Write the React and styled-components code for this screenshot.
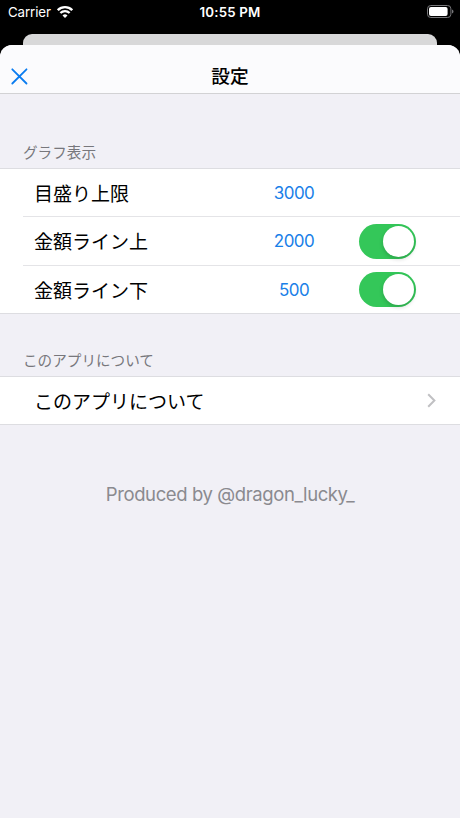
import React, { Component } from 'react';
import styled, { createGlobalStyle } from 'styled-components';

const GlobalStyle = createGlobalStyle`
    * {
        box-sizing: border-box;
    }
    body {
        margin: 0;
        background-color: #000;
        font-family: Inter, 'Noto Sans CJK JP', sans-serif;
    }
`;

const Screen = styled.div`
    display: flex;
    flex-direction: column;
    width: 460px;
    height: 818px;
    overflow: hidden;
    background-color: #000;
`;

const StatusBar = styled.header`
    display: grid;
    grid-template-columns: 1fr auto 1fr;
    align-items: center;
    height: 34px;
    padding: 0 6px 10px 8px;
    color: #fff;
    font-size: 13px;
`;

const Carrier = styled.div`
    display: flex;
    align-items: center;
    gap: 6px;
    font-size: 13.3px;
    letter-spacing: -0.1px;
`;

const Clock = styled.div`
    margin-right: 2px;
    font-size: 13.3px;
    font-weight: 600;
    letter-spacing: 0.2px;
`;

const BatteryIcon = styled.svg`
    justify-self: end;
    margin-bottom: 2px;
`;

const BackCard = styled.div`
    flex: none;
    height: 11px;
    margin: 0 23px;
    border-radius: 9px 9px 0 0;
    background-color: #d8d8d9;
`;

const Sheet = styled.main`
    flex: 1;
    border-radius: 12px 12px 0 0;
    overflow: hidden;
    background-color: #f1f0f6;
`;

const NavBar = styled.div`
    display: grid;
    grid-template-columns: 1fr auto 1fr;
    align-items: center;
    height: 49px;
    padding: 14px 11px 0;
    border-bottom: 1px solid #d2d2d4;
    background-color: #fbfbfd;
`;

const CloseButton = styled.button`
    display: flex;
    width: 17px;
    height: 17px;
    padding: 0;
    border: none;
    background: none;
`;

const Title = styled.h1`
    margin: 2px 0 0;
    font-size: 18.7px;
    line-height: 26px;
    font-weight: 500;
`;

const SectionTitle = styled.h2`
    height: ${props => props.$height}px;
    margin: 0;
    padding: ${props => props.$height - 27}px 23px 0;
    color: #77777c;
    font-size: 14.6px;
    line-height: 24px;
    font-weight: 400;
`;

const Group = styled.section`
    border-top: 1px solid #dddde1;
    border-bottom: 1px solid #dddde1;
    background-color: #fff;
`;

const Row = styled.div`
    display: grid;
    grid-template-columns: ${props => (props.$link ? '1fr auto' : '215px 90px 1fr')};
    align-items: center;
    height: ${props => props.$height}px;
    margin-left: 23px;
    padding: 0 24px 0 11px;
    color: #000;
    font-size: 19px;

    & + & {
        border-top: 1px solid #e4e4e7;
    }
`;

const Label = styled.span`
    line-height: 28px;
    margin-top: 4px;
`;

const Value = styled.span`
    justify-self: center;
    color: #1a7fe8;
    font-size: 17px;
    letter-spacing: -0.55px;
`;

const Switch = styled.span`
    display: flex;
    justify-content: flex-end;
    width: 57px;
    height: 35px;
    margin-left: 20px;
    padding: 2px;
    border-radius: 18px;
    background-color: #34c759;
`;

const Knob = styled.span`
    width: 31px;
    height: 31px;
    border-radius: 50%;
    background-color: #fff;
    box-shadow: 0 2px 4px rgba(0, 0, 0, 0.18);
`;

const Footer = styled.p`
    margin: 57px 0 0;
    color: #8a8a8f;
    font-size: 18.5px;
    line-height: 24px;
    letter-spacing: -0.4px;
    text-align: center;
`;

const settings = [
    { label: '目盛り上限', value: '3000', height: 47 },
    { label: '金額ライン上', value: '2000', toggle: true, height: 49 },
    { label: '金額ライン下', value: '500', toggle: true, height: 48 }
];

class App extends Component {
    render() {
        return (
            <Screen>
                <GlobalStyle />
                <StatusBar>
                    <Carrier>
                        Carrier
                        <svg width="16" height="12" viewBox="0 0 16 12" fill="none" stroke="#fff" strokeWidth="2.3">
                            <path d="M0.8 4.2a10.2 10.2 0 0 1 14.4 0" />
                            <path d="M3.4 7a6.5 6.5 0 0 1 9.2 0" />
                            <path d="M8 12L5.5 9.4a3.6 3.6 0 0 1 5 0z" fill="#fff" stroke="none" />
                        </svg>
                    </Carrier>
                    <Clock>10:55 PM</Clock>
                    <BatteryIcon width="27" height="13" viewBox="0 0 27 13">
                        <rect x="0.5" y="0.5" width="23.4" height="12" rx="3.3" fill="none" stroke="#77777a" />
                        <rect x="2" y="2" width="18.6" height="9" rx="2" fill="#fff" />
                        <path d="M25 4.5c2 0.8 2 3.2 0 4z" fill="#77777a" />
                    </BatteryIcon>
                </StatusBar>
                <BackCard />
                <Sheet>
                    <NavBar>
                        <CloseButton aria-label="close">
                            <svg width="17" height="17" viewBox="0 0 17 17" stroke="#0a7cf0" strokeWidth="1.8" strokeLinecap="round">
                                <path d="M1.3 1.3l14.2 14.2M15.5 1.3L1.3 15.5" />
                            </svg>
                        </CloseButton>
                        <Title>設定</Title>
                    </NavBar>
                    <SectionTitle $height={74}>グラフ表示</SectionTitle>
                    <Group>
                        {settings.map(item => (
                            <Row key={item.label} $height={item.height}>
                                <Label>{item.label}</Label>
                                <Value>{item.value}</Value>
                                {item.toggle && <Switch><Knob /></Switch>}
                            </Row>
                        ))}
                    </Group>
                    <SectionTitle $height={62}>このアプリについて</SectionTitle>
                    <Group>
                        <Row $link $height={47}>
                            <Label>このアプリについて</Label>
                            <svg width="9" height="15" viewBox="0 0 9 15" fill="none" stroke="#c0c0c3" strokeWidth="2">
                                <path d="M1.2 1.2l6.2 6.3-6.2 6.3" />
                            </svg>
                        </Row>
                    </Group>
                    <Footer>Produced by @dragon_lucky_</Footer>
                </Sheet>
            </Screen>
        );
    }
}

export default App;
